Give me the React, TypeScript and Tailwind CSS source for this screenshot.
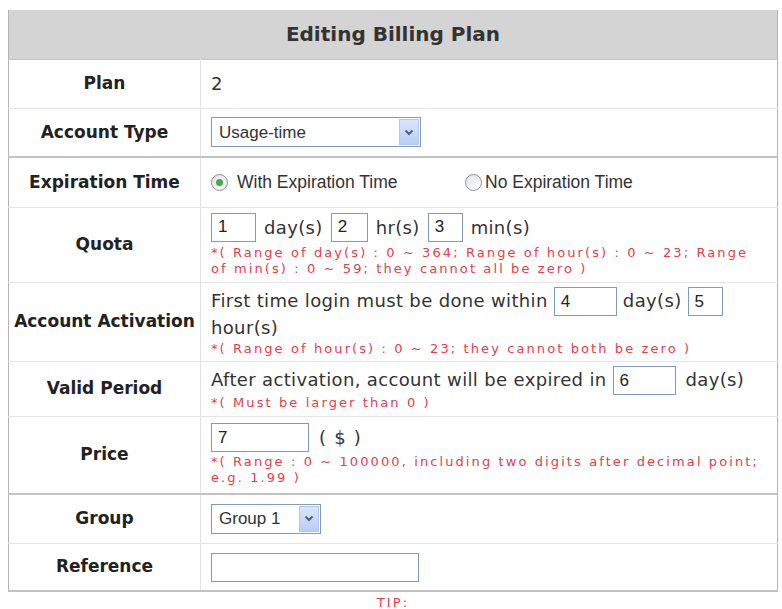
import React from 'react';

// small helpers for the old-style form controls
function TextBox({ value, width }: { value: string; width: number }) {
  return (
    <span
      className="inline-flex items-center h-[29px] border border-[#7f9db9] bg-white px-[6px] align-middle font-['Liberation_Sans',sans-serif] text-[17px] text-[#222] tracking-normal"
      style={{ width }}
    >
      {value}
    </span>
  );
}

function Dropdown({ value, width }: { value: string; width: number }) {
  return (
    <span
      className="inline-flex items-stretch h-[30px] border border-[#7f9db9] bg-white align-middle"
      style={{ width }}
    >
      <span className="flex-1 flex items-center pl-[7px] font-['Liberation_Sans',sans-serif] text-[17px] tracking-normal text-[#333]">
        {value}
      </span>
      <span className="w-[20px] m-[1px] flex items-center justify-center bg-gradient-to-b from-[#dbe6fc] to-[#b9cdf5] border border-[#b4c6ee]">
        <svg width="10" height="7" viewBox="0 0 10 7">
          <path d="M1.5 1.5 L5 5 L8.5 1.5" fill="none" stroke="#4d6185" strokeWidth="2" />
        </svg>
      </span>
    </span>
  );
}

function Radio({ checked }: { checked?: boolean }) {
  return (
    <span className="inline-flex items-center justify-center w-[17px] h-[17px] rounded-full border border-[#8a8f99] bg-gradient-to-br from-[#e3e3e3] to-white align-middle">
      {checked && <span className="w-[7px] h-[7px] rounded-full bg-[#3fae4a]" />}
    </span>
  );
}

const labelCell =
  "w-[192px] text-center align-middle border-r border-[#e3e3e3] font-['DejaVu_Sans',sans-serif] font-bold text-[17px] tracking-normal text-[#222]";
const valueCell = "pl-[10px] pr-[6px] align-middle";
const hint = "font-['DejaVu_Sans',sans-serif] text-[13px] leading-[16px] tracking-[2.1px] text-[#e4404a]";

export default function App() {
  return (
    <div className="w-[782px] h-[609px] overflow-hidden bg-white pt-[10px] pl-[8px]">
      <table className="w-[770px] border-collapse border-x border-[#b4b4b4] font-['DejaVu_Sans',sans-serif] text-[18px] tracking-[0.35px] text-[#333]">
        <tbody>
          <tr className="h-[49px] bg-[#d4d4d4] border-b border-[#c4c4bc]">
            <td colSpan={2} className="text-center font-bold text-[20px] tracking-normal text-[#333]">
              Editing Billing Plan
            </td>
          </tr>

          <tr className="h-[49px] border-b border-[#e6e6e6]">
            <td className={labelCell}>Plan</td>
            <td className={valueCell}>2</td>
          </tr>

          <tr className="h-[49px] border-b-2 border-[#c2c2c2]">
            <td className={labelCell}>Account Type</td>
            <td className={valueCell}>
              <Dropdown value="Usage-time" width={210} />
            </td>
          </tr>

          <tr className="h-[50px] border-b border-[#e6e6e6]">
            <td className={labelCell}>Expiration Time</td>
            <td className={valueCell}>
              <div className="flex items-center font-['Liberation_Sans',sans-serif] text-[17.5px] tracking-normal">
                <Radio checked />
                <span className="ml-[9px] w-[228px]">With Expiration Time</span>
                <Radio />
                <span className="ml-[3px]">No Expiration Time</span>
              </div>
            </td>
          </tr>

          <tr className="h-[75px] border-b border-[#e6e6e6]">
            <td className={labelCell}>Quota</td>
            <td className={valueCell}>
              <div className="flex items-center gap-[8px]">
                <TextBox value="1" width={45} />
                <span>day(s)</span>
                <TextBox value="2" width={37} />
                <span>hr(s)</span>
                <TextBox value="3" width={35} />
                <span>min(s)</span>
              </div>
              <div className={hint + " mt-[3px]"}>
                *( Range of day(s) : 0 ~ 364; Range of hour(s) : 0 ~ 23; Range
                <br />
                of min(s) : 0 ~ 59; they cannot all be zero )
              </div>
            </td>
          </tr>

          <tr className="h-[79px] border-b border-[#e6e6e6]">
            <td className={labelCell}>Account Activation</td>
            <td className={valueCell}>
              <div className="leading-[23px]">
                First time login must be done within <TextBox value="4" width={63} /> day(s){' '}
                <TextBox value="5" width={35} />
                <br />
                hour(s)
              </div>
              <div className={hint + " mt-[2px]"}>*( Range of hour(s) : 0 ~ 23; they cannot both be zero )</div>
            </td>
          </tr>

          <tr className="h-[55px] border-b border-[#e6e6e6]">
            <td className={labelCell}>Valid Period</td>
            <td className={valueCell}>
              <div className="leading-[23px]">
                After activation, account will be expired in <TextBox value="6" width={63} />
                <span className="ml-[10px]">day(s)</span>
              </div>
              <div className={hint}>*( Must be larger than 0 )</div>
            </td>
          </tr>

          <tr className="h-[78px] border-b-2 border-[#c2c2c2]">
            <td className={labelCell}>Price</td>
            <td className={valueCell}>
              <div className="flex items-center gap-[10px]">
                <TextBox value="7" width={98} />
                <span className="tracking-[1.2px]">( $ )</span>
              </div>
              <div className={hint + " mt-[2px]"}>
                *( Range : 0 ~ 100000, including two digits after decimal point;
                <br />
                e.g. 1.99 )
              </div>
            </td>
          </tr>

          <tr className="h-[49px] border-b border-[#e6e6e6]">
            <td className={labelCell}>Group</td>
            <td className={valueCell}>
              <Dropdown value="Group 1" width={110} />
            </td>
          </tr>

          <tr className="h-[48px] border-b-2 border-[#c2c2c2]">
            <td className={labelCell}>Reference</td>
            <td className={valueCell}>
              <TextBox value="" width={208} />
            </td>
          </tr>
        </tbody>
      </table>
      <div className={"w-[770px] text-center mt-[3px] " + hint}>TIP:</div>
    </div>
  );
}
